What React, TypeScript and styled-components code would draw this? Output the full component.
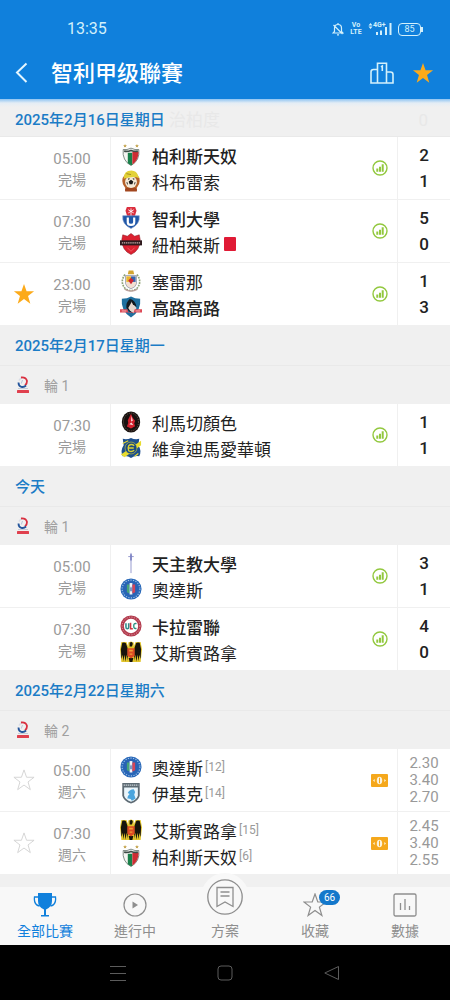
import React from 'react';
import styled, { createGlobalStyle, css } from 'styled-components';

const BLUE = '#1080dc';
const GOLD = '#fcaa1a';

const GlobalStyle = createGlobalStyle`
  * { box-sizing: border-box; }
  body {
    margin: 0;
    background: #f0f0f0;
    font-family: Roboto, "Noto Sans CJK TC", sans-serif;
    color: #222;
  }
  button {
    font: inherit;
    color: inherit;
    background: none;
    border: 0;
    padding: 0;
    cursor: pointer;
  }
  svg { display: block; flex: none; }
`;

const Screen = styled.div`
  display: flex;
  flex-direction: column;
  min-height: 100vh;
`;

/* ---------- header ---------- */

const Header = styled.header`
  background: ${BLUE};
  color: #fff;
`;

const StatusBar = styled.div`
  display: flex;
  align-items: center;
  justify-content: space-between;
  padding: 18px 29px 7px 67px;
  line-height: 22px;
  font-size: 16px;
  color: #d3f0fb;
`;

const StatusIcons = styled.div`
  display: flex;
  align-items: center;
  gap: 6px;
`;

const VoLte = styled.span`
  width: 12px;
  font-size: 7px;
  line-height: 7px;
  font-weight: 700;
  text-align: center;
`;

const Signal = styled.span`
  position: relative;
  width: 24px;
  height: 14px;
`;

const SignalLabel = styled.span`
  position: absolute;
  left: 5px;
  top: 0;
  font-size: 7px;
  line-height: 7px;
  font-weight: 700;
`;

const Battery = styled.span`
  position: relative;
  width: 23px;
  height: 13px;
  border: 1px solid currentColor;
  border-radius: 4px;
  font-size: 9px;
  line-height: 11px;
  text-align: center;
  &::after {
    content: '';
    position: absolute;
    right: -3px;
    top: 3px;
    width: 2px;
    height: 5px;
    background: currentColor;
  }
`;

const TitleBar = styled.div`
  display: flex;
  align-items: center;
  height: 52px;
  padding: 0 16px 0 12px;
`;

const Title = styled.h1`
  flex: 1;
  margin: 0;
  padding: 2px 0 0 19px;
  font-size: 22px;
  line-height: 30px;
  font-weight: 500;
`;

const HeaderButtons = styled.div`
  display: flex;
  align-items: center;
  gap: 18px;
`;

/* ---------- list ---------- */

const List = styled.main`
  position: relative;
  flex: 1;
  &::before {
    content: '';
    position: absolute;
    inset: 0 0 auto;
    height: 8px;
    z-index: 1;
    background: linear-gradient(#8fc4f2, rgba(220, 235, 248, 0.6) 50%, rgba(240, 240, 240, 0));
  }
`;

const DateHeader = styled.h2<{ $sticky?: boolean }>`
  margin: 0;
  padding: 0 15px;
  height: ${p => (p.$sticky ? 38 : 41)}px;
  line-height: 42px;
  border-bottom: 1px solid #e9e9e9;
  font-size: 15px;
  font-weight: 500;
  color: #1b7cc6;
`;

const PassedRow = styled.div`
  position: absolute;
  top: 0;
  left: 169px;
  right: 22px;
  display: flex;
  justify-content: space-between;
  line-height: 42px;
  font-size: 17px;
  color: #e8e8e8;
  z-index: -1;
`;

const Round = styled.div`
  display: flex;
  align-items: center;
  gap: 14px;
  height: 38px;
  padding-left: 16px;
  font-size: 14px;
  color: #a0a0a0;
`;

const Match = styled.article`
  display: flex;
  height: 62px;
  background: #fff;
  & + & {
    height: 63px;
    border-top: 1px solid #f0f0f0;
  }
`;

const Left = styled.div`
  display: flex;
  align-items: center;
  width: 110px;
`;

const StarSlot = styled.div`
  display: flex;
  justify-content: center;
  width: 48px;
`;

const Time = styled.div`
  width: 48px;
  padding-top: 4px;
  text-align: center;
  font-size: 15px;
  line-height: 21px;
  color: #9a9a9a;
`;

const TimeNote = styled.div`
  font-size: 14px;
`;

const Teams = styled.div`
  flex: 1;
  min-width: 0;
  display: flex;
  flex-direction: column;
  justify-content: center;
  padding-left: 9px;
  border-left: 1px solid #f0f0f0;
`;

const Team = styled.div<{ $win?: boolean }>`
  display: flex;
  align-items: center;
  height: 26px;
  font-size: 17px;
  white-space: nowrap;
  font-weight: ${p => (p.$win ? 500 : 400)};
`;

const TeamName = styled.span`
  padding-left: 10px;
`;

const Rank = styled.span`
  padding-left: 2px;
  font-size: 12px;
  color: #9a9a9a;
`;

const RedCard = styled.span`
  width: 12px;
  height: 14px;
  margin-left: 4px;
  border-radius: 1px;
  background: #e01a35;
`;

const Extra = styled.div`
  display: flex;
  align-items: center;
  justify-content: center;
  width: 35px;
`;

const Scores = styled.div<{ $odds?: boolean }>`
  display: flex;
  flex-direction: column;
  justify-content: center;
  width: 53px;
  border-left: 1px solid #f0f0f0;
  text-align: center;
  ${p =>
    p.$odds
      ? css`
          font-size: 15px;
          line-height: 17px;
          color: #999;
        `
      : css`
          font-size: 17px;
          line-height: 26px;
          font-weight: 500;
        `}
`;

/* ---------- bottom ---------- */

const TabBar = styled.nav`
  display: grid;
  grid-template-columns: repeat(5, 1fr);
  height: 58px;
  background: #f8f8f8;
`;

const Tab = styled.button<{ $active?: boolean }>`
  display: flex;
  flex-direction: column;
  align-items: center;
  padding-top: 6px;
  font-size: 14px;
  line-height: 24px;
  color: ${p => (p.$active ? BLUE : '#8e8e8e')};
`;

const TabIcon = styled.span`
  position: relative;
  height: 26px;
`;

const Raised = styled.span`
  position: absolute;
  left: 50%;
  bottom: -2px;
  transform: translateX(-50%);
  padding: 6px;
  border-radius: 50%;
  background: #f8f8f8;
`;

const Badge = styled.span`
  position: absolute;
  left: 16px;
  top: -3px;
  width: 21px;
  border-radius: 8px;
  background: #1478cb;
  color: #fff;
  font-size: 10px;
  line-height: 15px;
  text-align: center;
`;

const SystemBar = styled.footer`
  display: grid;
  grid-template-columns: repeat(3, 1fr);
  align-items: center;
  justify-items: center;
  height: 55px;
  padding: 0 64px;
  background: #000;
  color: #5c5c5c;
`;

/* ---------- icons ---------- */

const Star = ({ size = 22, filled = false, color = GOLD, width = 1 }: { size?: number; filled?: boolean; color?: string; width?: number }) => (
  <svg width={size} height={size} viewBox="0 0 24 24" fill={filled ? color : 'none'} stroke={filled ? 'none' : color} strokeWidth={width}>
    <path d="M12 1l2.800 8H23l-6.600 5.100L18.900 22.500 12 17.500 5.100 22.500 7.600 14.100 1 9h8.200z" />
  </svg>
);

const StatIcon = () => (
  <svg width="16" height="16" viewBox="0 0 16 16" role="img" aria-label="數據">
    <circle cx="8" cy="8" r="7" fill="none" stroke="#92c83e" strokeWidth="1.400" />
    <path d="M4.300 8.600h2v3.200h-2zM7 6.700h2v5.100H7zM9.700 4.200h2v7.600h-2z" fill="#92c83e" />
  </svg>
);

const CashIcon = () => (
  <svg width="17" height="13" viewBox="0 0 17 13" role="img" aria-label="賠率">
    <rect width="17" height="13" rx="1" fill="#f5a81c" />
    <ellipse cx="8.500" cy="6.500" rx="2.700" ry="3.800" fill="#fdf3dc" />
    <path d="M8.500 3.800v5.400" stroke="#f5a81c" strokeWidth="1" />
    <path d="M2 6.500l1.700-1.500v3zM15 6.500l-1.700-1.500v3z" fill="#fdf3dc" />
  </svg>
);

const LeagueIcon = () => (
  <svg width="14" height="18" viewBox="0 0 14 18">
    <path d="M3 4.500A5 5 0 0 1 7 1.500" fill="none" stroke="#d8dce6" strokeWidth="1.500" />
    <path d="M5 1.500q5-.5 6 3.500 0 3-2 4.500" fill="none" stroke="#d93040" strokeWidth="1.800" />
    <path d="M2.500 6.500c0 5 5 5.500 7.500 3" fill="none" stroke="#24559c" strokeWidth="1.800" />
    <path d="M6.500 4l-1.200 3.500" stroke="#b8c4dc" />
    <rect x="2" y="12" width="10" height="1" fill="#c6cbd6" />
    <rect x="1" y="14" width="12" height="3" rx=".5" fill="#e0404e" />
  </svg>
);

const crests: Record<string, React.ReactNode> = {
  palestino: (
    <>
      <path d="M5.500 0l.6 1.300 1.400.1-1 1 .3 1.400-1.300-.7-1.300.7.300-1.400-1-1 1.400-.1zM18.500 0l.6 1.300 1.400.1-1 1 .3 1.400-1.300-.7-1.300.7.300-1.400-1-1 1.400-.1z" fill="#c3a24c" />
      <path d="M3.500 6q4 .8 8.500-1.500 4.500 2.300 8.500 1.500Q22 18 12 23.500 2 18 3.500 6z" fill="#f5f5f2" stroke="#55645c" strokeWidth=".8" />
      <path d="M8.500 9.500h5v13L12 23.300l-3.500-2.200z" fill="#19804a" />
      <path d="M13.500 8.500h6.800q-.2 9.500-6.800 13.900z" fill="#cf2c32" />
      <path d="M4.500 7.800q4 .6 7.500-.8 4 1.400 7.500.8" fill="none" stroke="#3f4d48" strokeWidth="1.800" />
    </>
  ),
  cobresal: (
    <>
      <circle cx="12" cy="12" r="9.500" fill="#b5612a" />
      <circle cx="12" cy="13" r="6.500" fill="#f4ead8" />
      <path d="M4 9.500Q4 .5 12.500.5q5.500.5 7 5l1.500 3.500q-6-3-17 .5z" fill="#e3d238" />
      <path d="M7 4l5 1" stroke="#9c8a21" />
      <path d="M12 10.500l2.500 2-1 3h-3l-1-3zM7 13l1.500 1-.5 2.500zM17 13l-1.500 1 .5 2.500zM9 9l2 .6-2 1.400zM15.500 9l-2 .6 2 1.400z" fill="#1d1b1a" />
      <rect x="5.500" y="19.500" width="13" height="4" rx="1" fill="#a2461f" />
    </>
  ),
  uchile: (
    <>
      <path d="M7.500 0h9L18 4l-2 6.500H8L6 4z" fill="#dc2f3e" />
      <path d="M9 3l6 3.500M15 3L9 6.500M12 1.500V10" stroke="#fff" strokeWidth=".9" />
      <path d="M3 9.500h18q1 9.500-9 14Q2 19 3 9.500z" fill="#1f57a8" stroke="#7d98c6" strokeWidth=".7" />
      <path d="M8.500 11.500v5q0 3 3.500 3t3.500-3v-5" fill="none" stroke="#fff" strokeWidth="2.400" />
    </>
  ),
  nublense: (
    <>
      <path d="M3 2l5 1.500L12 .5l4 3L21 2l1 5q0 12-10 16.500Q2 19 2 7z" fill="#dc2130" stroke="#8c2029" strokeWidth=".6" />
      <rect x="0" y="8" width="24" height="5.500" fill="#2e1a1d" />
      <path d="M2 10.800h20" stroke="#cdb0ae" strokeWidth="1.500" strokeDasharray="1.500 .8" />
      <path d="M8 16l4 4 4-4" fill="none" stroke="#f25e66" />
    </>
  ),
  serena: (
    <>
      <path d="M5.500 5Q-.5 13 5.500 20q6.500 5 13 0 6-7 0-15" fill="none" stroke="#8fa376" strokeWidth="1.800" strokeDasharray="2 1" />
      <path d="M8.500 4.500l1-4h5l1 4z" fill="#d3a531" />
      <path d="M6 6h12v9q-1 4-6 5.500Q7 19 6 15z" fill="#f2dfd0" stroke="#7e8ba2" strokeWidth=".7" />
      <path d="M7 7h5v6H7z" fill="#e8b62e" />
      <path d="M12 7h5v6h-5z" fill="#3563b0" />
      <path d="M9 11.500l3-3 3 3-3 4z" fill="#cf2733" />
      <path d="M5 21q7 4 14 0" fill="none" stroke="#bb9f9c" strokeWidth="1.500" />
    </>
  ),
  colocolo: (
    <>
      <path d="M2 3q6 0 10-2.500Q16 3 22 3q1.500 13-10 20.500Q.5 16 2 3z" fill="#1f6f9f" />
      <path d="M11 3q-5 4-4 10l3 4 5 2 2-5z" fill="#151b20" />
      <path d="M13 6l-4 7 2 3 4 3 3-6z" fill="#e7d6cd" />
      <path d="M11 3q6 2 7 9l-4-3z" fill="#11171c" />
      <path d="M0 14.500h8l1 3h6l1-3h8v3.500H0z" fill="#dd4956" />
      <path d="M2 16.300h5M17 16.300h5" stroke="#f3c5c6" strokeWidth=".9" />
    </>
  ),
  limache: (
    <>
      <ellipse cx="12" cy="12" rx="10" ry="11.500" fill="#17110f" />
      <ellipse cx="12" cy="12" rx="8.200" ry="9.700" fill="none" stroke="#7a6257" strokeWidth="1" strokeDasharray="1 1.200" />
      <path d="M10 7l2-4 2 4.500 2.500 3-1 3 1 3-4.500 2.500L7.500 17l1.500-4-.5-3z" fill="#d3202d" />
      <path d="M12.500 5.500l1.500 5-2 1zM10 14.500l2.500-2 2 3z" fill="#f5dcdc" />
    </>
  ),
  everton: (
    <>
      <path d="M3 2q5 1 9-1 4 2 9 1l-1 7q4 6 1 12-5-1-9 2-4-3-9-2-3-6 1-12z" fill="#1d4f8d" />
      <path d="M1 19L23 4v5L5 22z" fill="#e8dc2f" />
      <circle cx="12" cy="12" r="6.500" fill="#1b4b80" stroke="#e8dc2f" strokeWidth=".6" />
      <path d="M15.500 9.500q-3-2.500-6 0-1.500 3 0 5.500 3 2 6-.5M9 12h6" fill="none" stroke="#d9d034" strokeWidth="1.500" />
      <path d="M3 7l6-3M16 21l4-3" stroke="#e8dc2f" strokeWidth="1.200" />
    </>
  ),
  catolica: (
    <>
      <path d="M12 1v22M9 5h6" stroke="#8d92cb" strokeWidth="1" />
      <path d="M11 2.500h2v6L12 10l-1-1.500z" fill="#8186c6" />
    </>
  ),
  audax: (
    <>
      <circle cx="12" cy="12" r="11.500" fill="#2767b8" />
      <circle cx="12" cy="12" r="9.700" fill="none" stroke="#a3c1e6" strokeWidth="1.200" strokeDasharray="1.300 1.500" />
      <circle cx="12" cy="11.500" r="7.800" fill="#2a62b4" />
      <path d="M7.500 7h3v10l-3-1.500z" fill="#46a47a" />
      <path d="M10.500 5.500h3V18h-3z" fill="#f1f4f8" />
      <path d="M13.500 7h3v8.500l-3 1.500z" fill="#d54558" />
      <path d="M12 9l.7 2v3.500h-1.400V11z" fill="#3667ac" />
    </>
  ),
  calera: (
    <>
      <circle cx="12" cy="12" r="11.500" fill="#b23a4d" />
      <circle cx="12" cy="12" r="9.700" fill="none" stroke="#dfa8ae" strokeWidth="1" strokeDasharray="1.200 1.500" />
      <circle cx="12" cy="12" r="7.800" fill="#fff" />
      <path d="M6.500 9v4q0 2 1.500 2t1.500-2V9" fill="none" stroke="#2d8c8b" strokeWidth="1.700" />
      <path d="M11.500 8.500V15H14" fill="none" stroke="#cf3443" strokeWidth="1.700" />
      <path d="M18 9.500q-3-1-3 2.500t3 2.500" fill="none" stroke="#2a8f80" strokeWidth="1.500" />
    </>
  ),
  espanola: (
    <>
      <path d="M1.500 1h5.500l2 5V1.500L12 .5l3 1V6l2-5h5.500L24 9l-1.500 14h-21L0 9z" fill="#e2c52c" />
      <path d="M2.500 2Q5 1 6.500 2.500L8.500 8.500v13L7.300 15 6 22.500 5 15l-1.500 7L3 15l-1.500 4.500L1 9zM21.500 2Q19 1 17.500 2.500l-2 6v13l1.200-6.500L18 22.500l1-7.500 1.500 7 .5-7 1.500 4.500L23 9zM10.500 1.500l2.500-.5 1 2-1 3h-2.500zM9.500 18.500h5L13.500 23h-3z" fill="#17140c" />
      <path d="M8 8h8v8l-4 3-4-3z" fill="#dd4b24" />
      <path d="M10 9.500h4v2h-4zM10.500 13.500h3V15h-3z" fill="#f0a034" />
    </>
  ),
  iquique: (
    <>
      <path d="M2.500 1h19v14q-1.500 6-9.500 8.500Q4 21 2.500 15z" fill="#5d6a73" />
      <path d="M4.500 6h15v9q-1.500 4.500-7.500 6.500Q6 19.500 4.500 15z" fill="#eaf5fb" />
      <path d="M4 3.500h16" stroke="#c7d0d5" strokeWidth="1.300" strokeDasharray="1.500 .7" />
      <path d="M8 18q0-3 2.500-5l-2-1q2-4 6.500-4l1.500 3-1 3 1.500 4-4 2.500q-1-3-5-2.500z" fill="#4aa5de" />
    </>
  ),
};

const Crest = ({ id }: { id: string }) => (
  <svg width="22" height="22" viewBox="0 0 24 24" aria-hidden="true">
    {crests[id]}
  </svg>
);

/* ---------- data ---------- */

type TeamData = { id: string; name: string; rank?: number; win?: boolean; red?: boolean };
type MatchData = { time: string; note: string; fav?: 'on' | 'off'; teams: TeamData[]; scores?: number[]; odds?: string[] };
type Day = { date: string; round?: string; matches: MatchData[] };

const days: Day[] = [
  {
    date: '2025年2月16日星期日',
    matches: [
      { time: '05:00', note: '完場', teams: [{ id: 'palestino', name: '柏利斯天奴', win: true }, { id: 'cobresal', name: '科布雷索' }], scores: [2, 1] },
      { time: '07:30', note: '完場', teams: [{ id: 'uchile', name: '智利大學', win: true }, { id: 'nublense', name: '紐柏萊斯', red: true }], scores: [5, 0] },
      { time: '23:00', note: '完場', fav: 'on', teams: [{ id: 'serena', name: '塞雷那' }, { id: 'colocolo', name: '高路高路', win: true }], scores: [1, 3] },
    ],
  },
  {
    date: '2025年2月17日星期一',
    round: '輪 1',
    matches: [{ time: '07:30', note: '完場', teams: [{ id: 'limache', name: '利馬切顏色' }, { id: 'everton', name: '維拿迪馬愛華頓' }], scores: [1, 1] }],
  },
  {
    date: '今天',
    round: '輪 1',
    matches: [
      { time: '05:00', note: '完場', teams: [{ id: 'catolica', name: '天主教大學', win: true }, { id: 'audax', name: '奧達斯' }], scores: [3, 1] },
      { time: '07:30', note: '完場', teams: [{ id: 'calera', name: '卡拉雷聯', win: true }, { id: 'espanola', name: '艾斯賓路拿' }], scores: [4, 0] },
    ],
  },
  {
    date: '2025年2月22日星期六',
    round: '輪 2',
    matches: [
      { time: '05:00', note: '週六', fav: 'off', teams: [{ id: 'audax', name: '奧達斯', rank: 12 }, { id: 'iquique', name: '伊基克', rank: 14 }], odds: ['2.30', '3.40', '2.70'] },
      { time: '07:30', note: '週六', fav: 'off', teams: [{ id: 'espanola', name: '艾斯賓路拿', rank: 15 }, { id: 'palestino', name: '柏利斯天奴', rank: 6 }], odds: ['2.45', '3.40', '2.55'] },
    ],
  },
];

const MatchRow = ({ match }: { match: MatchData }) => (
  <Match>
    <Left>
      <StarSlot>
        {match.fav && (
          <button aria-label="收藏">
            <Star filled={match.fav === 'on'} color={match.fav === 'on' ? GOLD : '#d2d2d2'} />
          </button>
        )}
      </StarSlot>
      <Time>
        <div>{match.time}</div>
        <TimeNote>{match.note}</TimeNote>
      </Time>
    </Left>
    <Teams>
      {match.teams.map(t => (
        <Team key={t.id} $win={t.win}>
          <Crest id={t.id} />
          <TeamName>{t.name}</TeamName>
          {t.rank && <Rank>[{t.rank}]</Rank>}
          {t.red && <RedCard />}
        </Team>
      ))}
    </Teams>
    <Extra>{match.odds ? <CashIcon /> : <StatIcon />}</Extra>
    <Scores $odds={!!match.odds}>
      {(match.odds ?? match.scores ?? []).map((v, i) => (
        <span key={i}>{v}</span>
      ))}
    </Scores>
  </Match>
);

export default function App() {
  return (
    <Screen>
      <GlobalStyle />
      <Header>
        <StatusBar>
          <span>13:35</span>
          <StatusIcons>
            <svg width="12" height="14" viewBox="0 0 12 14" fill="none" stroke="currentColor" strokeWidth="1.200">
              <path d="M2.500 9.500V6a3.500 3.500 0 0 1 7 0v3.500l1.500 1.500H1zM6 1v1.500M5 12.800h2M1.500 3l9 9" />
            </svg>
            <VoLte>Vo LTE</VoLte>
            <Signal>
              <svg width="24" height="14" viewBox="0 0 24 14" fill="currentColor">
                <path d="M2.500 1l2 2.500h-4zM2.500 7l2-2.500h-4zM8 10h2v3H8zM12 8.500h2V13h-2zM17 5h2v8h-2zM21.500 1h2v12h-2z" />
              </svg>
              <SignalLabel>4G+</SignalLabel>
            </Signal>
            <Battery>85</Battery>
          </StatusIcons>
        </StatusBar>
        <TitleBar>
          <button aria-label="返回">
            <svg width="20" height="22" viewBox="0 0 20 22" fill="none" stroke="#e4f6ff" strokeWidth="2">
              <path d="M14.500 1.500L5 10.500l9.500 9.500" />
            </svg>
          </button>
          <Title>智利甲级聯賽</Title>
          <HeaderButtons>
            <button aria-label="排名">
              <svg width="24" height="22" viewBox="0 0 24 22" fill="none" stroke="#d3f0fb" strokeWidth="1.600">
                <path d="M7.500 21V1.200h9V21M7.500 7.500H3.500Q1 7.500 1 10v11h22V12.500Q23 10 20.500 10h-4M11 5l1.300-1V9" />
              </svg>
            </button>
            <button aria-label="收藏聯賽">
              <Star filled />
            </button>
          </HeaderButtons>
        </TitleBar>
      </Header>

      <List>
        <PassedRow aria-hidden="true">
          <span>治柏度</span>
          <span>0</span>
        </PassedRow>
        {days.map((day, i) => (
          <section key={day.date}>
            <DateHeader $sticky={i === 0}>{day.date}</DateHeader>
            {day.round && (
              <Round>
                <LeagueIcon />
                <span>{day.round}</span>
              </Round>
            )}
            {day.matches.map((m, j) => (
              <MatchRow key={j} match={m} />
            ))}
          </section>
        ))}
      </List>

      <TabBar>
        <Tab $active>
          <TabIcon>
            <svg width="24" height="24" viewBox="0 0 24 24" fill="currentColor">
              <path d="M5 0h14v8q0 6-6 8.500V22h3v1.500H8V22h3v-5.500Q5 14 5 8z" />
              <path d="M5 4H1.500q-1 8 5 9M19 4h3.500q1 8-5 9" fill="none" stroke="currentColor" strokeWidth="1.300" />
            </svg>
          </TabIcon>
          <span>全部比賽</span>
        </Tab>
        <Tab>
          <TabIcon>
            <svg width="24" height="24" viewBox="0 0 24 24" fill="none" stroke="currentColor" strokeWidth="1.200">
              <circle cx="12" cy="12" r="11" />
              <path d="M9.500 8.500l5.500 3.500-5.500 3.500z" fill="currentColor" stroke="none" />
            </svg>
          </TabIcon>
          <span>進行中</span>
        </Tab>
        <Tab>
          <TabIcon>
            <Raised>
              <svg width="36" height="36" viewBox="0 0 36 36" fill="none" stroke="currentColor" strokeWidth="1.300">
                <circle cx="18" cy="18" r="17.200" />
                <path d="M10 8.500h16v19l-8-4.500-8 4.500zM13.500 13h9M13.500 17h9" />
              </svg>
            </Raised>
          </TabIcon>
          <span>方案</span>
        </Tab>
        <Tab>
          <TabIcon>
            <Star size={24} color="#8e8e8e" width={1.2} />
            <Badge>66</Badge>
          </TabIcon>
          <span>收藏</span>
        </Tab>
        <Tab>
          <TabIcon>
            <svg width="24" height="24" viewBox="0 0 24 24" fill="none" stroke="currentColor" strokeWidth="1.300">
              <rect x="1" y="1" width="22" height="22" rx="1.500" />
              <path d="M7.500 10v7M12 6v11M16.500 13v4" />
            </svg>
          </TabIcon>
          <span>數據</span>
        </Tab>
      </TabBar>

      <SystemBar>
        <button aria-label="選單">
          <svg width="16" height="16" viewBox="0 0 16 16" stroke="currentColor">
            <path d="M0 1.500h16M0 8.500h16M0 15.500h16" />
          </svg>
        </button>
        <button aria-label="主頁">
          <svg width="16" height="16" viewBox="0 0 16 16" fill="none" stroke="currentColor">
            <rect x="1" y="1" width="14" height="14" rx="3" />
          </svg>
        </button>
        <button aria-label="上一頁">
          <svg width="16" height="16" viewBox="0 0 16 16" fill="none" stroke="currentColor">
            <path d="M14.500 1.500v13L.8 8z" strokeLinejoin="round" />
          </svg>
        </button>
      </SystemBar>
    </Screen>
  );
}
